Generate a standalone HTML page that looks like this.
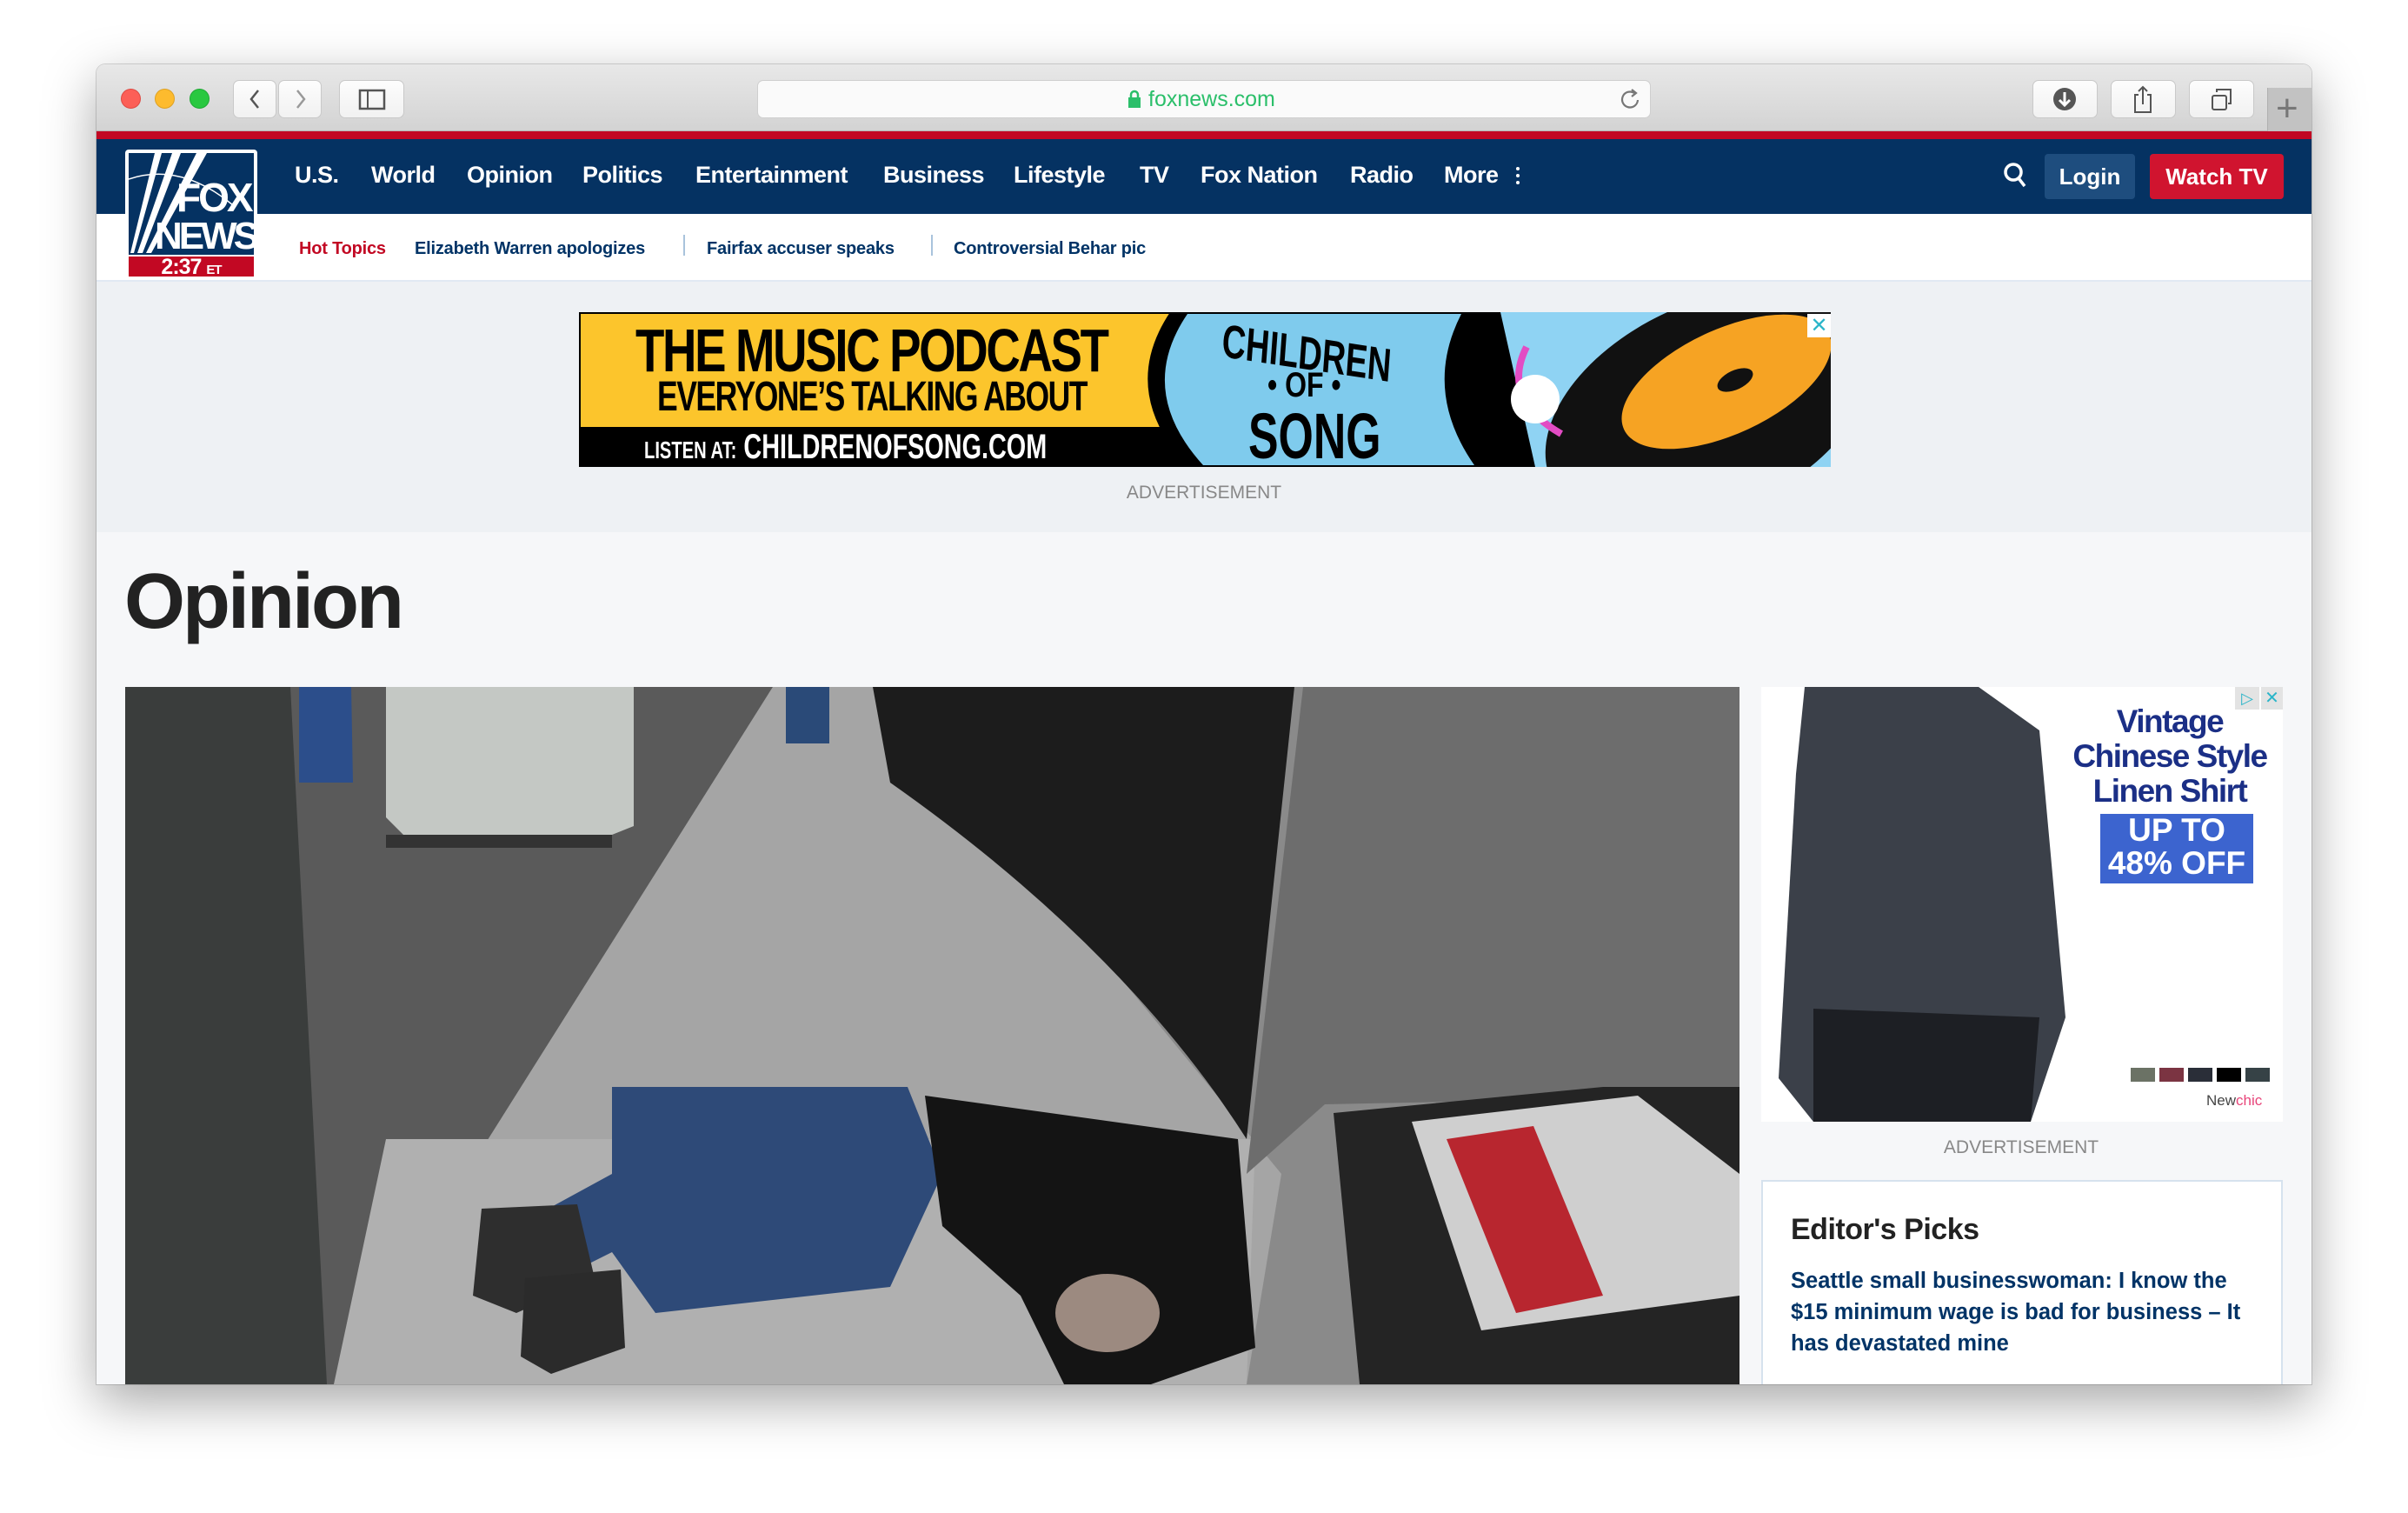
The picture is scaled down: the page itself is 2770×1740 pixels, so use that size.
<!DOCTYPE html>
<html><head><meta charset="utf-8">
<style>
*{margin:0;padding:0;box-sizing:border-box}
body{width:2770px;height:1740px;background:#fff;position:relative;overflow:hidden;font-family:"Liberation Sans",sans-serif}
.a{position:absolute}
#win{left:111px;top:74px;width:2548px;height:1518px;border-radius:10px 10px 0 0;overflow:hidden;box-shadow:0 20px 60px rgba(0,0,0,.35),0 0 0 1px rgba(0,0,0,.15);background:#f6f7f9}
.btn{background:linear-gradient(#fdfdfd,#f1f1f1);border:1px solid #c9c9c9;border-radius:7px}
.nav{color:#fff;font-weight:bold;font-size:27px;top:112px;letter-spacing:-0.5px}
.sub{font-weight:bold;font-size:20px;color:#003366;top:201px;letter-spacing:-0.2px}
.sep{top:196px;width:2px;height:24px;background:#a9c3dc}
</style></head><body>
<div id="win" class="a">
 <div class="a" style="left:0;top:0;width:2548px;height:77px;background:linear-gradient(#e8e8e8,#d3d3d3);border-bottom:1px solid #b5b5b5"></div>
 <div class="a" style="left:28px;top:28px;width:23px;height:23px;border-radius:50%;background:#fc5f57;border:1px solid #de4a43"></div>
 <div class="a" style="left:67px;top:28px;width:23px;height:23px;border-radius:50%;background:#fdbb2e;border:1px solid #dea123"></div>
 <div class="a" style="left:107px;top:28px;width:23px;height:23px;border-radius:50%;background:#29c840;border:1px solid #1fa934"></div>
 <div class="a btn" style="left:157px;top:18px;width:50px;height:44px"></div>
 <div class="a btn" style="left:209px;top:18px;width:50px;height:44px"></div>
 <svg class="a" style="left:157px;top:18px" width="102" height="44"><path d="M29 12 L21 22 L29 32" stroke="#555" stroke-width="2.5" fill="none"/><path d="M74 12 L82 22 L74 32" stroke="#999" stroke-width="2.5" fill="none"/></svg>
 <div class="a btn" style="left:279px;top:18px;width:75px;height:44px"></div>
 <svg class="a" style="left:279px;top:18px" width="75" height="44"><rect x="24" y="12" width="28" height="21" fill="none" stroke="#555" stroke-width="2.5"/><line x1="33" y1="12" x2="33" y2="33" stroke="#555" stroke-width="2"/></svg>
 <div class="a" style="left:760px;top:18px;width:1028px;height:44px;background:#fafafa;border:1px solid #cfcfcf;border-radius:7px"></div>
 <svg class="a" style="left:1185px;top:28px" width="18" height="24"><rect x="2" y="10" width="14" height="12" fill="#2bbf6a"/><path d="M5 11 V7 a4 4 0 0 1 8 0 V11" stroke="#2bbf6a" stroke-width="2.5" fill="none"/></svg>
 <div class="a" style="left:1210px;top:26px;font-size:25px;color:#2bbf6a">foxnews.com</div>
 <svg class="a" style="left:1750px;top:27px" width="28" height="28"><path d="M19 6 A9 9 0 1 0 23 14" stroke="#777" stroke-width="2.2" fill="none"/><path d="M16 2 L21 6 L16 10" stroke="#777" stroke-width="2.2" fill="none"/></svg>
 <div class="a btn" style="left:2227px;top:18px;width:75px;height:44px"></div>
 <svg class="a" style="left:2227px;top:18px" width="75" height="44"><circle cx="37" cy="22" r="13" fill="#555"/><path d="M37 14 V28 M31 23 L37 29 L43 23" stroke="#fff" stroke-width="3" fill="none"/></svg>
 <div class="a btn" style="left:2317px;top:18px;width:75px;height:44px"></div>
 <svg class="a" style="left:2317px;top:18px" width="75" height="44"><path d="M32 17 H28 V37 H46 V17 H42" stroke="#555" stroke-width="2" fill="none"/><path d="M37 8 V28 M32 13 L37 8 L42 13" stroke="#555" stroke-width="2" fill="none"/></svg>
 <div class="a btn" style="left:2407px;top:18px;width:75px;height:44px"></div>
 <svg class="a" style="left:2407px;top:18px" width="75" height="44"><rect x="27" y="18" width="16" height="16" rx="2" fill="none" stroke="#555" stroke-width="2"/><path d="M32 14 V11 H48 V27 H45" stroke="#555" stroke-width="2" fill="none"/></svg>
 <div class="a" style="left:2497px;top:27px;width:51px;height:50px;background:#c2c2c2;border-left:1px solid #b0b0b0"></div>
 <div class="a" style="left:2507px;top:26px;font-size:44px;color:#777;font-weight:lighter">+</div>
 <div class="a" style="left:0;top:77px;width:2548px;height:9px;background:#c20823"></div>
 <div class="a" style="left:0;top:86px;width:2548px;height:86px;background:#053262"></div>
 <div class="a" style="left:0;top:172px;width:2548px;height:78px;background:#fff;border-bottom:2px solid #e1e9f3"></div>
 <div class="a" style="left:0;top:250px;width:2548px;height:288px;background:#eef1f4"></div>
 <div class="a" style="left:33px;top:98px;width:152px;height:148px;background:#fff;border-radius:4px"></div>
 <div class="a" style="left:37px;top:102px;width:144px;height:117px;background:#053262;overflow:hidden">
  <svg width="144" height="117" style="position:absolute;left:0;top:0"><path d="M2 115 L30 0 L38 0 L6 115Z M10 115 L50 0 L60 0 L16 115Z M20 115 L78 0 L90 0 L26 115Z" fill="#fff"/><path d="M0 30 Q60 10 120 60" stroke="#fff" stroke-width="1.5" fill="none"/></svg>
  <div class="a" style="left:55px;top:28px;font-weight:bold;font-size:46px;color:#fff;letter-spacing:-3px;line-height:46px">FOX</div>
  <div class="a" style="left:30px;top:74px;font-weight:bold;font-size:44px;color:#fff;letter-spacing:-4px;line-height:44px">NEWS</div>
 </div>
 <div class="a" style="left:37px;top:221px;width:144px;height:23px;background:#c20823;color:#fff;font-weight:bold;font-size:25px;line-height:24px;text-align:center;letter-spacing:-1px">2:37 <span style="font-size:15px">ET</span></div>
 <div class="a nav" style="left:228px">U.S.</div>
 <div class="a nav" style="left:316px">World</div>
 <div class="a nav" style="left:426px">Opinion</div>
 <div class="a nav" style="left:559px">Politics</div>
 <div class="a nav" style="left:689px">Entertainment</div>
 <div class="a nav" style="left:905px">Business</div>
 <div class="a nav" style="left:1055px">Lifestyle</div>
 <div class="a nav" style="left:1200px">TV</div>
 <div class="a nav" style="left:1270px">Fox Nation</div>
 <div class="a nav" style="left:1442px">Radio</div>
 <div class="a nav" style="left:1550px">More</div>
 <div class="a" style="left:1633px;top:118px;width:4px;height:4px;background:#fff;border-radius:50%;box-shadow:0 8px 0 #fff,0 16px 0 #fff"></div>
 <svg class="a" style="left:2193px;top:112px" width="30" height="34"><circle cx="12" cy="12" r="9" stroke="#fff" stroke-width="3.5" fill="none"/><path d="M18 19 L25 28" stroke="#fff" stroke-width="3.5"/></svg>
 <div class="a" style="left:2241px;top:103px;width:104px;height:52px;background:#1e4d7e;border-radius:4px;color:#fff;font-weight:bold;font-size:26px;line-height:52px;text-align:center">Login</div>
 <div class="a" style="left:2362px;top:103px;width:154px;height:52px;background:#d0142f;border-radius:4px;color:#fff;font-weight:bold;font-size:26px;line-height:52px;text-align:center">Watch TV</div>
 <div class="a sub" style="left:233px;color:#c20823">Hot Topics</div>
 <div class="a sub" style="left:366px">Elizabeth Warren apologizes</div>
 <div class="a sep" style="left:675px"></div>
 <div class="a sub" style="left:702px">Fairfax accuser speaks</div>
 <div class="a sep" style="left:960px"></div>
 <div class="a sub" style="left:986px">Controversial Behar pic</div>
 <div class="a" style="left:555px;top:285px;width:1440px;height:178px;background:#000;overflow:hidden">
  <div class="a" style="left:2px;top:2px;width:700px;height:130px;background:#fcc52c"></div>
  <svg class="a" style="left:0;top:0" width="1440" height="178"><path d="M680 0 Q620 90 700 178 L1070 178 Q1000 90 1040 0Z" fill="#000"/><path d="M700 2 Q640 90 718 176 L1030 176 Q970 90 1015 2Z" fill="#7fcbed"/><path d="M1060 0 H1440 V178 H1100Z" fill="#8fd3f3"/><ellipse cx="1300" cy="110" rx="200" ry="120" fill="#111" transform="rotate(-25 1300 110)"/><ellipse cx="1320" cy="80" rx="130" ry="60" fill="#f6a323" transform="rotate(-25 1320 80)"/><ellipse cx="1330" cy="78" rx="22" ry="11" fill="#111" transform="rotate(-25 1330 78)"/><path d="M1090 40 Q1060 100 1130 140" stroke="#e24cc4" stroke-width="8" fill="none"/><circle cx="1100" cy="100" r="28" fill="#fff"/></svg>
  <div class="a" style="left:65px;top:4px;font-weight:bold;font-size:70px;letter-spacing:-3px;transform:scaleX(.78);transform-origin:left;white-space:nowrap;color:#000">THE MUSIC PODCAST</div>
  <div class="a" style="left:90px;top:70px;font-weight:bold;font-size:48px;letter-spacing:-2px;transform:scaleX(.74);transform-origin:left;white-space:nowrap;color:#000">EVERYONE’S TALKING ABOUT</div>
  <div class="a" style="left:75px;top:133px;font-weight:bold;font-size:40px;transform:scaleX(.72);transform-origin:left;white-space:nowrap;color:#fff"><span style="font-size:28px">LISTEN AT:</span> CHILDRENOFSONG.COM</div>
  <div class="a" style="left:740px;top:2px;font-weight:bold;font-size:54px;transform:scaleX(.7) rotate(6deg);transform-origin:left;color:#000">CHILDREN</div>
  <div class="a" style="left:792px;top:62px;font-weight:bold;font-size:40px;transform:scaleX(.8);transform-origin:left;color:#000">• OF •</div>
  <div class="a" style="left:770px;top:100px;font-weight:bold;font-size:74px;transform:scaleX(.7);transform-origin:left;color:#000">SONG</div>
  <div class="a" style="left:1413px;top:2px;width:27px;height:27px;background:#fff;color:#2bb5c9;font-size:24px;text-align:center;line-height:27px">✕</div>
 </div>
 <div class="a" style="left:1174px;top:481px;font-size:21px;color:#888;width:200px;text-align:center">ADVERTISEMENT</div>
 <div class="a" style="left:32px;top:567px;font-weight:bold;font-size:90px;letter-spacing:-3px;color:#222">Opinion</div>
 <svg class="a" style="left:33px;top:716px" width="1857" height="802" viewBox="0 0 1857 802" preserveAspectRatio="none">
  <rect width="1857" height="802" fill="#8a8a8a"/>
  <path d="M180 0 H745 L240 802 H180Z" fill="#5a5a5a"/>
  <path d="M745 0 H870 L1330 560 L1290 802 H240Z" fill="#a5a5a5"/>
  <path d="M240 802 L300 520 L1300 520 L1290 802Z" fill="#b0b0b0"/>
  <path d="M860 0 H1345 L1290 520 Q1150 300 880 110Z" fill="#1c1c1c"/>
  <path d="M1355 0 H1857 V470 L1380 480 L1290 560 Z" fill="#6d6d6d"/>
  <path d="M0 0 H190 L232 802 H0Z" fill="#3a3d3c"/>
  <path d="M200 0 H260 L262 110 H200Z" fill="#2c4e8b"/>
  <path d="M300 0 H585 V160 L560 170 H320 L300 150Z" fill="#c4c8c4"/>
  <path d="M300 170 H560 V185 H300Z" fill="#333"/>
  <path d="M760 0 H810 V65 H760Z" fill="#2a4a78"/>
  <path d="M560 460 L900 460 L940 560 L880 690 L610 720 L560 650 L480 690 L450 620 L560 560Z" fill="#2e4a78"/>
  <path d="M920 470 L1280 520 L1300 760 L1180 802 L1080 802 L1030 700 L940 620Z" fill="#141414"/>
  <ellipse cx="1130" cy="720" rx="60" ry="45" fill="#9c8a80"/>
  <path d="M410 600 L520 595 L540 680 L450 720 L400 700Z" fill="#2e2e2e"/>
  <path d="M460 680 L570 670 L575 760 L490 790 L455 770Z" fill="#2b2b2b"/>
  <path d="M1390 490 L1700 460 L1857 460 V802 H1420Z" fill="#242424"/>
  <path d="M1480 500 L1740 470 L1857 560 V700 L1560 740Z" fill="#cfcfcf"/>
  <path d="M1520 520 L1620 505 L1700 700 L1600 720Z" fill="#b8262f"/>
 </svg>
 <div class="a" style="left:1915px;top:716px;width:600px;height:500px;background:#fff;overflow:hidden">
  <svg class="a" style="left:0;top:0" width="600" height="500"><path d="M50 0 L250 0 L320 50 L350 380 L310 500 L60 500 L20 450 L40 100Z" fill="#3b4049"/><path d="M60 370 L320 380 L310 500 L60 500Z" fill="#1d1f24"/></svg>
  <div class="a" style="left:340px;top:20px;width:260px;text-align:center;font-weight:bold;font-size:37px;line-height:40px;color:#1b2f86;letter-spacing:-1.5px">Vintage<br>Chinese Style<br>Linen Shirt</div>
  <div class="a" style="left:390px;top:146px;width:176px;height:80px;background:#3c64cf;color:#fff;font-weight:bold;font-size:37px;line-height:38px;text-align:center">UP TO<br>48% OFF</div>
  <div class="a" style="left:425px;top:438px;width:28px;height:16px;background:#6b7265"></div>
  <div class="a" style="left:458px;top:438px;width:28px;height:16px;background:#7b3442"></div>
  <div class="a" style="left:491px;top:438px;width:28px;height:16px;background:#2a2e38"></div>
  <div class="a" style="left:524px;top:438px;width:28px;height:16px;background:#000"></div>
  <div class="a" style="left:557px;top:438px;width:28px;height:16px;background:#364246"></div>
  <div class="a" style="left:512px;top:466px;font-size:17px;color:#444">New<span style="color:#e8457a">chic</span></div>
  <div class="a" style="left:545px;top:0;width:28px;height:26px;background:#e3e3e3;color:#2bb5c9;font-size:18px;text-align:center;line-height:26px">▷</div>
  <div class="a" style="left:575px;top:0;width:25px;height:26px;background:#e3e3e3;color:#2bb5c9;font-size:20px;text-align:center;line-height:26px">✕</div>
 </div>
 <div class="a" style="left:2114px;top:1234px;font-size:21px;color:#888;width:200px;text-align:center">ADVERTISEMENT</div>
 <div class="a" style="left:1915px;top:1283px;width:600px;height:260px;background:#fff;border:2px solid #d6e2ee">
  <div class="a" style="left:32px;top:36px;font-weight:bold;font-size:34px;color:#222;letter-spacing:-0.5px">Editor's Picks</div>
  <div class="a" style="left:32px;top:96px;width:520px;font-weight:bold;font-size:25.5px;line-height:36px;color:#003366">Seattle small businesswoman: I know the $15 minimum wage is bad for business – It has devastated mine</div>
 </div>
</div>
</body></html>
